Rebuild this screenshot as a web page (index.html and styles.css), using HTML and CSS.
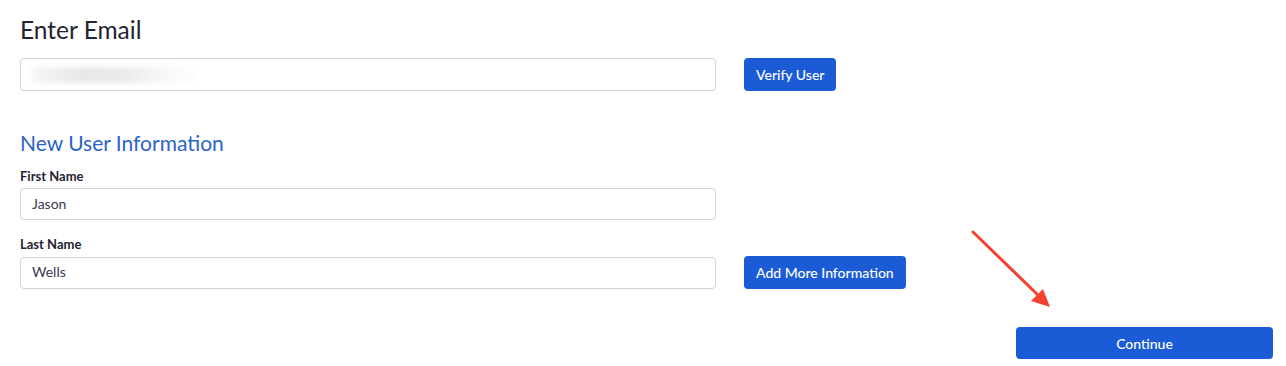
FILE: index.html
```html
<!DOCTYPE html>
<html lang="en">
<head>
  <meta charset="UTF-8" />
  <title>Add User</title>
  <link rel="stylesheet" href="styles.css">
</head>
<body>
  <main class="form">
    <h1>Enter Email</h1>
    <div class="row">
      <div class="field">
        <div class="input email-blur"><span class="blur"></span></div>
      </div>
      <button class="btn">Verify User</button>
    </div>

    <h2>New User Information</h2>

    <label>First Name</label>
    <div class="row">
      <div class="field">
        <div class="input">Jason</div>
      </div>
    </div>

    <label>Last Name</label>
    <div class="row">
      <div class="field">
        <div class="input">Wells</div>
      </div>
      <button class="btn">Add More Information</button>
    </div>

    <div class="actions">
      <button class="btn btn-wide">Continue</button>
    </div>
  </main>

  <!-- annotation arrow -->
  <svg class="arrow" width="100" height="100" viewBox="0 0 100 100">
    <line x1="3" y1="2" x2="68" y2="65" stroke="#f5412f" stroke-width="3" stroke-linecap="round"/>
    <polygon points="80,77 61,71 73,59" fill="#f5412f"/>
  </svg>
</body>
</html>
```

FILE: styles.css
```css
* {
  margin: 0;
  padding: 0;
  box-sizing: border-box;
}

body {
  font-family: Lato, 'Open Sans', sans-serif;
  background: #fff;
  color: #232333;
  position: relative;
  width: 1286px;
  height: 366px;
  overflow: hidden;
}

.form {
  padding: 0 13px 0 20px;
}

h1 {
  font-size: 24.5px;
  font-weight: 400;
  line-height: 28px;
  margin: 16px 0 14px;
  color: #232333;
}

h2 {
  font-size: 21px;
  font-weight: 400;
  line-height: 26px;
  margin-top: 39px;
  color: #2b63c9;
}

label {
  display: block;
  font-size: 13px;
  font-weight: 700;
  line-height: 16px;
  margin: 12px 0 4px;
  color: #232333;
}
label + .row + label { margin-top: 16px; }

/* Rows with input + button */
.row {
  display: flex;
  align-items: center;
  gap: 28px;
}
.field { width: 696px; }

.input {
  height: 32px;
  border: 1px solid #d4d4d8;
  border-radius: 4px;
  padding: 0 11px 2px;
  display: flex;
  align-items: center;
  font-size: 14px;
  color: #39394d;
}
.email-blur { height: 33px; padding-bottom: 0; }
.blur {
  width: 170px;
  height: 16px;
  background: linear-gradient(90deg, #f6f6f6 0%, #e8e8e8 30%, #ebebeb 55%, #f8f8f8 80%, #fff 100%);
  filter: blur(2px);
}

.btn {
  font-family: Lato, 'Open Sans', sans-serif;
  font-size: 14px;
  font-weight: 500;
  color: #fff;
  background: #1b5cd6;
  border: 0;
  border-radius: 4px;
  height: 33px;
  padding: 0 12px;
}

.actions {
  display: flex;
  justify-content: flex-end;
  margin-top: 38px;
}
.btn-wide {
  width: 257px;
  height: 32px;
}

/* Annotation overlay */
.arrow {
  position: absolute;
  left: 970px;
  top: 230px;
}
```
